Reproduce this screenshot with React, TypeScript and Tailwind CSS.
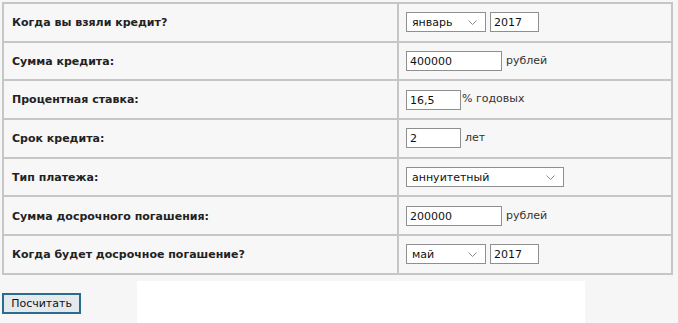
import React from "react";

const font = "font-['Tahoma','DejaVu_Sans','Verdana',sans-serif]";

function Chevron() {
  return (
    <svg width="9" height="5" viewBox="0 0 9 5" className="absolute right-[8px] top-[7px]">
      <path d="M0.5 0.5 L4.5 4.5 L8.5 0.5" fill="none" stroke="#8a8a8a" strokeWidth="1" />
    </svg>
  );
}

function Select({ value, w }: { value: string; w: string }) {
  return (
    <div className={`relative h-[20px] ${w} border border-[#8f8f8f] bg-white`}>
      <span className="absolute left-[5px] top-[2px] text-[11px] leading-[15px] text-[#111]">{value}</span>
      <Chevron />
    </div>
  );
}

function Input({ value, w }: { value: string; w: string }) {
  return (
    <div className={`h-[20px] ${w} border border-[#8f8f8f] bg-white pl-[3px] pt-[2px] text-[11px] leading-[15px] text-[#111]`}>
      {value}
    </div>
  );
}

function Unit({ children, gap = true }: { children: React.ReactNode; gap?: boolean }) {
  return <span className={`text-[11px] text-[#333] ${gap ? "ml-[4px]" : "ml-[1px]"}`}>{children}</span>;
}

const rows: { label: string; field: React.ReactNode }[] = [
  {
    label: "Когда вы взяли кредит?",
    field: (
      <>
        <Select value="январь" w="w-[80px]" />
        <div className="ml-[4px]"><Input value="2017" w="w-[49px]" /></div>
      </>
    ),
  },
  {
    label: "Сумма кредита:",
    field: (
      <>
        <Input value="400000" w="w-[96px]" />
        <Unit>рублей</Unit>
      </>
    ),
  },
  {
    label: "Процентная ставка:",
    field: (
      <>
        <Input value="16,5" w="w-[55px]" />
        <Unit gap={false}>% годовых</Unit>
      </>
    ),
  },
  {
    label: "Срок кредита:",
    field: (
      <>
        <Input value="2" w="w-[55px]" />
        <Unit>лет</Unit>
      </>
    ),
  },
  {
    label: "Тип платежа:",
    field: <Select value="аннуитетный" w="w-[158px]" />,
  },
  {
    label: "Сумма досрочного погашения:",
    field: (
      <>
        <Input value="200000" w="w-[96px]" />
        <Unit>рублей</Unit>
      </>
    ),
  },
  {
    label: "Когда будет досрочное погашение?",
    field: (
      <>
        <Select value="май" w="w-[80px]" />
        <div className="ml-[4px]"><Input value="2017" w="w-[49px]" /></div>
      </>
    ),
  },
];

export default function App() {
  return (
    <div className={`h-[323px] w-[678px] overflow-hidden bg-[#f6f6f6] pt-[2px] pl-[2px] ${font}`}>
      <table className="w-[671px] border-collapse bg-[#f7f7f7]">
        <tbody>
          {rows.map((r) => (
            <tr key={r.label} className="h-[38.7px]">
              <td className="w-[395px] border-2 border-[#c6c6c6] pl-[8px] pt-[2px] text-[11px] font-bold text-[#222]">
                {r.label}
              </td>
              <td className="border-2 border-[#c6c6c6] pl-[7px]">
                <div className="flex items-center">{r.field}</div>
              </td>
            </tr>
          ))}
        </tbody>
      </table>
      <div className="flex">
        <div className="mt-[15px] w-[135px]">
          <button className="h-[21px] w-[79px] border-2 border-[#2b6b8e] bg-[#e4e9ed] text-[11px] leading-[15px] text-[#111]">
            Посчитать
          </button>
        </div>
        <div className="mt-[6px] h-[60px] w-[448px] bg-white" />
      </div>
    </div>
  );
}
